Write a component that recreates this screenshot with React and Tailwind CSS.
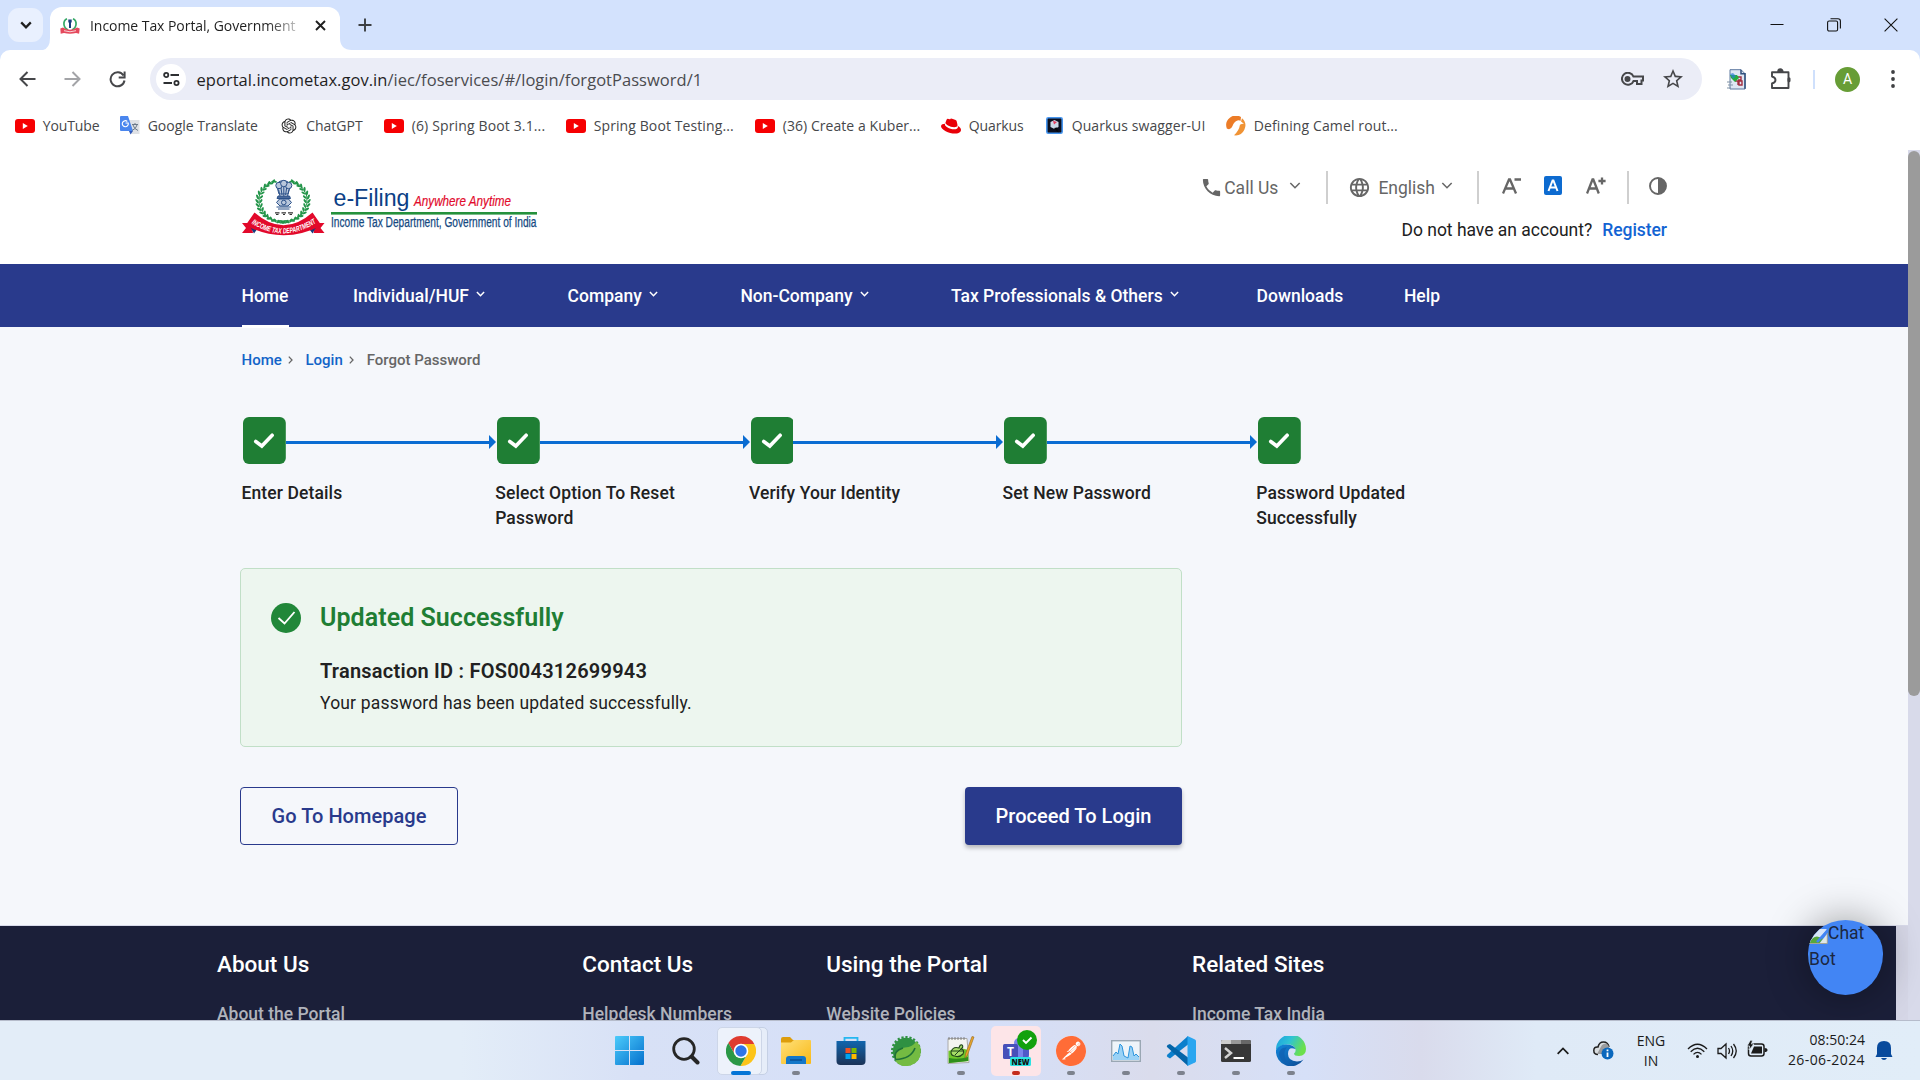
import React from "react";
import { SiPostman } from "react-icons/si";
import { FaRedhat } from "react-icons/fa";
import { RiOpenaiFill } from "react-icons/ri";
import { MdPhone, MdLanguage, MdOutlineStarBorder } from "react-icons/md";

/* ---------- shared glyphs ---------- */

function Chevron({ className, w = 10, h = 6, stroke = 1.6 }) {
  return (
    <svg className={className} width={w} height={h} viewBox="0 0 10 6" fill="none" stroke="currentColor" strokeWidth={stroke}>
      <path d="M1 0.8 5 4.9 9 0.8" />
    </svg>
  );
}

const LEAF_ANGLES = Array.from({ length: 15 }, (_, i) => 112 + i * 11.4);

function Emblem() {
  return (
    <g>
      <path d="M34 4.5A25 21.5 0 0 0 40 45.5M52 4.5A25 21.5 0 0 1 46 45.5" fill="none" stroke="#2f9a4e" strokeWidth="1" />
      {LEAF_ANGLES.map((deg) => {
        const a = (deg * Math.PI) / 180;
        const x = Math.cos(a) * 24;
        const y = 25 - Math.sin(a) * 21;
        const r = 90 - deg;
        return (
          <g key={deg} fill="#23954a">
            <ellipse cx={43 + x * 1.08} cy={y} rx="1.1" ry="2.6" transform={`rotate(${r - 125} ${43 + x * 1.08} ${y})`} />
            <ellipse cx={43 + x * 0.92} cy={y} rx="1" ry="2.3" transform={`rotate(${r - 55} ${43 + x * 0.92} ${y})`} />
            <ellipse cx={43 - x * 1.08} cy={y} rx="1.1" ry="2.6" transform={`rotate(${125 - r} ${43 - x * 1.08} ${y})`} />
            <ellipse cx={43 - x * 0.92} cy={y} rx="1" ry="2.3" transform={`rotate(${55 - r} ${43 - x * 0.92} ${y})`} />
          </g>
        );
      })}
      <g stroke="#2b5089" fill="#b9c7dc" strokeWidth="1">
        <path d="M38 7c1-3 9-3 11 0l1 4-2 7H39l-2-7z" />
        <circle cx="39" cy="9.5" r="3.2" />
        <circle cx="48.6" cy="9.5" r="3.2" />
        <circle cx="43.8" cy="7.5" r="3.2" />
        <path d="M38.5 13.5 40 20M43.8 11v9M49 13.5 47.6 20M41 12l1 7M46.6 12l-1 7" />
        <path d="M38 20h11.5l1 2.5H37z" fill="#4a699b" />
        <path d="M39.5 23h9l3 3.5-3.5 3.5h-8L36.500 26.500z" />
        <circle cx="43.800" cy="26.500" r="2.300" />
        <path d="M36.500 31h14.500M38 33h11.500" />
      </g>
      <path d="M35 36.800h4.500M41.500 36.800h4.500M48 36.800h5M36 38.500h2.500M43 38.500h2M49.500 38.500h2.500" stroke="#333" strokeWidth="1.200" />
      <path d="M2 47h9l2 10H2l4-5zM84.500 47h-9l-2 10h11l-4-5z" fill="#e2092b" />
      <path d="M8 47l10 5-4 5.500zM78.500 47l-10 5 4 5.500z" fill="#173a7c" />
      <path d="M14.500 36.500Q43.500 62 72.500 36.500L81.500 49.500Q43.500 69 5.500 49.500Z" fill="#e2092b" />
      <path id="ribbon" d="M10.500 46.800Q43.500 68.500 77.500 46" fill="none" />
      <text fontFamily="Liberation Sans" fontWeight="700" fontStyle="italic" fontSize="7.600" fill="#fff" textLength="69" lengthAdjust="spacingAndGlyphs">
        <textPath href="#ribbon" startOffset="1">INCOME TAX DEPARTMENT</textPath>
      </text>
    </g>
  );
}

function PortalLogo() {
  return (
    <svg className="overflow-visible" width="300" height="64" viewBox="0 0 300 64" fontFamily="Liberation Sans, Arial, sans-serif">
      <Emblem />
      <text x="93.500" y="29.600" fontSize="24.800" fill="#0b3f86" textLength="76" lengthAdjust="spacingAndGlyphs">e-Filing</text>
      <text x="174" y="29.600" fontSize="14.200" fontStyle="italic" fill="#e2092b" stroke="#e2092b" strokeWidth=".2" textLength="97" lengthAdjust="spacingAndGlyphs">Anywhere Anytime</text>
      <rect x="91" y="36" width="206" height="2.600" fill="#25913c" />
      <text x="91" y="51.200" fontSize="14" fill="#14497f" stroke="#14497f" strokeWidth=".25" textLength="205.500" lengthAdjust="spacingAndGlyphs">Income Tax Department, Government of India</text>
    </svg>
  );
}

function Favicon() {
  return (
    <svg width="20" height="16" viewBox="0 0 20 16">
      <path d="M7 .8C2.500 3 3 9.500 8 12M13 .8c4.500 2.200 4 8.700-1 11.200" fill="none" stroke="#35a865" strokeWidth="1.700" />
      <path d="M8.300 1.500h3.400V4l-.7 1v5H9V5l-.7-1z" fill="#173f7c" />
      <path d="M.3 10.500 3 9.500Q10 14 17 9.500l2.700 1-.6 5.300-3.100-.8Q10 16.500 4 15l-3.300.8z" fill="#e5485c" />
      <path d="M4 12.700q6 2.200 12 0" stroke="#f9d3d8" fill="none" />
    </svg>
  );
}

/* ---------- browser chrome ---------- */

function TabStrip() {
  return (
    <div className="flex h-[50px] items-start bg-[#d3e2fd]">
      <div className="ml-2 mt-2 flex h-[34px] w-[35px] items-center justify-center rounded-[11px] bg-[#e9f0fe] text-[#1f1f1f]">
        <Chevron w={12} h={8} stroke={1.900} />
      </div>
      <svg className="mt-[38px]" width="7" height="12" viewBox="0 0 7 12"><path d="M7 0v12H0Q7 10 7 0z" fill="#fff" /></svg>
      <div className="mt-[7px] flex h-[43px] w-[290px] items-center rounded-t-[12px] bg-white pb-[6px] pl-[10px]">
        <Favicon />
        <div className="ml-[10px] w-[207px] overflow-hidden whitespace-nowrap bg-gradient-to-r from-[#1f1f1f] from-85% to-[#c8c8c8] bg-clip-text text-[14px] tracking-[-0.05px] text-transparent">
          Income Tax Portal, Government
        </div>
        <svg className="ml-[18px]" width="11" height="11" viewBox="0 0 11 11" stroke="#1f1f1f" strokeWidth="1.900"><path d="M1 1l9 9M10 1l-9 9" /></svg>
      </div>
      <svg className="mt-[38px]" width="12" height="12" viewBox="0 0 12 12"><path d="M0 0v12h12Q0 12 0 0z" fill="#fff" /></svg>
      <svg className="ml-[6px] mt-[18px]" width="14" height="14" viewBox="0 0 14 14" stroke="#3c3f43" strokeWidth="1.900"><path d="M7 .5v13M.5 7h13" /></svg>
      <div className="ml-auto mr-[22px] mt-[18px] flex items-center gap-[43px]">
        <svg width="14" height="14" viewBox="0 0 14 14"><path d="M.5 6.500h13" stroke="#111" /></svg>
        <svg width="14" height="14" viewBox="0 0 14 14" fill="none" stroke="#111" strokeWidth="1.100"><rect x=".6" y="3" width="10" height="10" rx="1.500" /><path d="M3.500.7H11Q13.400.7 13.400 3v7.500" /></svg>
        <svg width="14" height="14" viewBox="0 0 14 14" stroke="#111" strokeWidth="1.100"><path d="M.6.600l12.800 12.800M13.400.600.6 13.400" /></svg>
      </div>
    </div>
  );
}

function Toolbar() {
  return (
    <div className="bg-[#d3e2fd]">
      <div className="flex h-[58px] items-center rounded-t-[10px] bg-white pl-[19px] text-[#46474a]">
        <svg width="17" height="16" viewBox="0 0 17 16" fill="none" stroke="currentColor" strokeWidth="2"><path d="M16.500 8H2M8.500 1 1.500 8l7 7" /></svg>
        <svg className="ml-[28px]" width="17" height="16" viewBox="0 0 17 16" fill="none" stroke="#a3a4a7" strokeWidth="2"><path d="M.5 8H15M8.500 1l7 7-7 7" /></svg>
        <svg className="ml-[28px]" width="17" height="17" viewBox="0 0 17 17" fill="none" stroke="currentColor" strokeWidth="2"><path d="M14.500 4.500A7 7 0 1 0 15.500 9.500M15.600.500v6H9.700" /></svg>
        <div className="ml-6 flex h-[42px] w-[1552px] items-center rounded-full bg-[#ebedf7] pl-[6px] pr-[17px]">
          <div className="flex h-[30px] w-[30px] items-center justify-center rounded-full bg-white text-[#2d2f32]">
            <svg width="17" height="14" viewBox="0 0 17 14" fill="none" stroke="currentColor" strokeWidth="1.800">
              <circle cx="3.200" cy="3" r="2.100" /><path d="M7.500 3H16M.5 11H9" /><circle cx="13.500" cy="11" r="2.100" />
            </svg>
          </div>
          <div className="ml-[10.500px] whitespace-nowrap pt-[3px] text-[16.500px] tracking-[0.040px] text-[#4a4b4f]">
            <span className="text-[#1f1f1f]">eportal.incometax.gov.in</span>/iec/foservices/#/login/forgotPassword/1
          </div>
          <svg className="ml-auto" width="23" height="14" viewBox="0 0 23 14" fill="none" stroke="currentColor" strokeWidth="2">
            <path d="M12.500 4.500H22v4h-1.500V12H16V9h-3.500A6 6 0 1 1 12.500 4.500z" /><circle cx="6.500" cy="7" r="2" fill="currentColor" />
          </svg>
          <MdOutlineStarBorder className="ml-[17px]" size={24} />
        </div>
        <svg className="ml-[25px]" width="19" height="21" viewBox="0 0 19 21">
          <path d="M3 .7h11l4 4V20H3z" fill="#dfe6f3" stroke="#5d789f" /><path d="M14 .7v4h4v15" fill="none" stroke="#31517e" strokeWidth="1.500" />
          <path d="M9 8h5v3h-3M8 12h3v4M12 12h3v4h-3z" fill="none" stroke="#a32e3f" strokeWidth="1.400" />
          <path d="M3 6h7l2 3-4 4-4-4z" fill="#26ad3d" /><path d="M3 5l3-1 3 3-3 3z" fill="#287ed5" opacity=".7" />
          <path d="M0 13h5M1 16h5M0 19h4" stroke="#8193a5" />
        </svg>
        <svg className="ml-[24px]" width="22" height="22" viewBox="0 0 22 22" fill="none" stroke="currentColor" strokeWidth="1.900">
          <path d="M2 4.200h16.500V20H2v-4.500q3.500-1 3.500-3.500T2 8.500z" strokeLinejoin="round" /><path d="M8.200 3.500a2 2 0 0 1 4.400 0z" fill="currentColor" /><path d="M19 10.800v2" strokeWidth="3" strokeLinecap="round" />
        </svg>
        <div className="ml-[21px] h-[19px] w-[2px] bg-[#cfe0fc]" />
        <div className="ml-[20px] flex h-[25px] w-[25px] items-center justify-center rounded-full bg-[#679d36] font-[Roboto] text-[14px] text-white">A</div>
        <svg className="ml-[31px]" width="4" height="18" viewBox="0 0 4 18" fill="#3f4043"><circle cx="2" cy="2" r="1.900" /><circle cx="2" cy="9" r="1.900" /><circle cx="2" cy="16" r="1.900" /></svg>
      </div>
    </div>
  );
}

function YouTube() {
  return <svg width="20" height="14" viewBox="0 0 20 14"><rect width="20" height="14" rx="3" fill="#f60002" /><path d="M7.800 4v6l5-3z" fill="#fff" /></svg>;
}

function Translate() {
  return (
    <svg width="20" height="19" viewBox="0 0 20 19">
      <path d="M8 4h11.500v14H11z" fill="#dfe1e5" /><path d="M0 1Q0 0 1 0h7l5 15H1q-1 0-1-1z" fill="#4a86ee" /><path d="M9 15h4l-2.500 3.500z" fill="#3159b8" />
      <path d="M6.500 6H9.200A3 3 0 1 1 8.300 4.500" transform="translate(-1 1)" stroke="#fff" fill="none" strokeWidth="1.200" />
      <path d="M12 8.500h6M15 7v1.500M17 9q-1 4-5 5.500M13 9q1 4 5 5.500" stroke="#6c7a89" fill="none" />
    </svg>
  );
}

function Swagger() {
  return (
    <svg width="17" height="17" viewBox="0 0 17 17">
      <rect x=".8" y=".8" width="15.400" height="15.400" rx="1.500" fill="#0b0f1e" stroke="#4796ef" strokeWidth="1.600" />
      <path d="M8.500 3 12.500 5v5l-4 2-4-2V5z" fill="#cdd9e8" /><path d="M7 3.700l4 1.300-3 2.500z" fill="#e63b5e" /><path d="M8 11l3-.5 1.500 5-2-1.500z" fill="#06070c" />
    </svg>
  );
}

function Camel() {
  return (
    <svg width="20" height="20" viewBox="0 0 20 20">
      <path d="M15 1A9.700 9.700 0 0 0 .8 12.500Q4.500 15 6.500 10q1.500-4.500 5-5.500 2-.5 3 .5z" fill="#ec7c27" />
      <path d="M16 2.300l-1 3.200 3 2.300q-2-.3-4 1-1 6-6 10.500A9.800 9.800 0 0 0 16 2.300z" fill="#f09335" />
    </svg>
  );
}

const BOOKMARKS = [
  { icon: <YouTube />, label: "YouTube", cls: "w-[105px] tracking-[-0.1px]" },
  { icon: <Translate />, label: "Google Translate", cls: "w-[158.500px]" },
  { icon: <RiOpenaiFill size={18} color="#222" />, label: "ChatGPT", cls: "w-[105.500px]" },
  { icon: <YouTube />, label: "(6) Spring Boot 3.1...", cls: "w-[182px] tracking-[0.14px]" },
  { icon: <YouTube />, label: "Spring Boot Testing...", cls: "w-[189px] tracking-[0.1px]" },
  { icon: <YouTube />, label: "(36) Create a Kuber...", cls: "w-[186px] tracking-[0.06px]" },
  { icon: <FaRedhat size={20} color="#e90008" />, label: "Quarkus", cls: "w-[103px] tracking-[-0.1px]" },
  { icon: <Swagger />, label: "Quarkus swagger-UI", cls: "w-[182px] tracking-[0.1px]" },
  { icon: <Camel />, label: "Defining Camel rout...", cls: "w-[180px] tracking-[0.12px]" },
];

function Bookmarks() {
  return (
    <div className="flex h-[42px] bg-white pl-[15px] text-[14px] text-[#46474a]">
      {BOOKMARKS.map((b) => (
        <div key={b.label} className={`flex h-[35px] shrink-0 items-center whitespace-nowrap ${b.cls}`}>
          <span className="mr-[7.700px] flex w-5 justify-center">{b.icon}</span>
          {b.label}
        </div>
      ))}
    </div>
  );
}

/* ---------- portal page ---------- */

function SiteHeader() {
  return (
    <header className="flex h-[114px] justify-between bg-white pl-[240px] pr-[241px] pt-[21px] text-[17.500px]">
      <div className="pt-[5px]"><PortalLogo /></div>
      <div className="flex flex-col items-end">
        <div className="flex h-[33px] items-center text-[#666]">
          <MdPhone size={23} className="-mt-[1px]" />
          <span className="ml-[1px] pt-[2px]">Call Us</span>
          <Chevron className="mb-1 ml-[11px]" w={12} h={7} stroke={1.300} />
          <div className="ml-[25px] h-[33px] w-[2px] bg-[#cfcfcf]" />
          <MdLanguage size={23} className="ml-[20px]" />
          <span className="ml-[7px] pt-[2px]">English</span>
          <Chevron className="mb-1 ml-[6px]" w={12} h={7} stroke={1.300} />
          <div className="ml-[24px] h-[33px] w-[2px] bg-[#cfcfcf]" />
          <svg className="mb-1 ml-[23px]" width="20" height="17" viewBox="0 0 20 17" fill="none" stroke="currentColor" strokeWidth="2.300"><path d="M1 16.500 7 2.500h1L14 16.500M3.500 11.500h8.300M12.500 2.500H19" /></svg>
          <svg className="mb-1 ml-[22px]" width="18" height="19" viewBox="0 0 18 19"><rect width="18" height="19" rx="2" fill="#0d6bd0" /><path d="M4.500 15 8.600 4.500h.8L13.500 15M6 11.500h6" fill="none" stroke="#fff" strokeWidth="2" /></svg>
          <svg className="mb-1 ml-[24px]" width="20" height="17" viewBox="0 0 20 17" fill="none" stroke="currentColor" strokeWidth="2.300"><path d="M1 16.500 6.500 2.500h.8L12.800 16.500M3.300 11.500h7.500M16 0.500v7M12.400 4h7.200" /></svg>
          <div className="ml-[21px] h-[33px] w-[2px] bg-[#cfcfcf]" />
          <svg className="mb-1 ml-[20px]" width="18" height="18" viewBox="0 0 18 18"><circle cx="9" cy="9" r="8" fill="none" stroke="#666" strokeWidth="1.900" /><path d="M9 1a8 8 0 0 1 0 16z" fill="#666" /></svg>
        </div>
        <div className="mt-[13px] flex h-[26px] items-center text-[#212121]">
          <span className="tracking-[-0.02px]">Do not have an account?</span>
          <span className="ml-[10px] font-medium tracking-[-0.050px] text-[#1264d3]">Register</span>
        </div>
      </div>
    </header>
  );
}

const NAV = [
  { label: "Individual/HUF", cls: "w-[214.600px]", menu: true },
  { label: "Company", cls: "w-[172.800px]", menu: true },
  { label: "Non-Company", cls: "w-[210.600px]", menu: true },
  { label: "Tax Professionals & Others", cls: "w-[305.600px]", menu: true },
  { label: "Downloads", cls: "w-[147.300px]" },
  { label: "Help", cls: "" },
];

function NavBar() {
  return (
    <nav className="flex h-[63px] bg-[#293a8c] pl-[241.500px] text-[17.500px] font-medium text-white">
      <div className="mr-[64.500px] flex h-[64px] w-[47px] items-center border-b-[3px] border-white pt-[3px]">Home</div>
      {NAV.map((n) => (
        <div key={n.label} className={`flex items-center whitespace-nowrap pt-[2px] ${n.cls}`}>
          {n.label}
          {n.menu && <Chevron className="mb-[5px] ml-[7.500px]" w={9} h={6} stroke={1.700} />}
        </div>
      ))}
    </nav>
  );
}

function Crumb() {
  return <svg className="mb-[1px]" width="5" height="8" viewBox="0 0 5 8" fill="none" stroke="#666" strokeWidth="1.300"><path d="M.8.6 4 4 .8 7.400" /></svg>;
}

function Breadcrumbs() {
  return (
    <div className="mt-[21px] flex h-6 items-center text-[15px] font-medium text-[#1264c8]">
      <span className="w-[46.500px]">Home</span><Crumb />
      <span className="ml-[12.500px] w-[43.500px]">Login</span><Crumb />
      <span className="ml-[12.700px] text-[#666]">Forgot Password</span>
    </div>
  );
}

const STEPS = ["Enter Details", "Select Option To Reset Password", "Verify Your Identity", "Set New Password", "Password Updated Successfully"];

function Stepper() {
  return (
    <div className="mt-[45px] flex h-[112px]">
      {STEPS.map((s, i) => (
        <div key={s} className="w-[253.700px]">
          <div className="flex items-center pl-[1.700px]">
            <svg width="42.800" height="47" viewBox="0 0 43 47" preserveAspectRatio="none" className="shrink-0">
              <rect width="43" height="47" rx="6" fill="#1f7e34" />
              <path d="M12.800 24.500 18.900 29 29.300 18.200" fill="none" stroke="#fff" strokeWidth="3.600" strokeLinecap="round" />
            </svg>
            {i < 4 && (
              <div className="-mr-[0.700px] mt-[3px] flex flex-1 items-center">
                <div className="h-[3px] flex-1 bg-[#0a6cd2]" />
                <svg width="7" height="14" viewBox="0 0 7 14"><path d="M0 0l7 7-7 7z" fill="#0a6cd2" /></svg>
              </div>
            )}
          </div>
          <div className="mt-[17px] w-[200px] text-[17.500px] font-medium leading-[25px] tracking-[0.110px] text-[#212121]">{s}</div>
        </div>
      ))}
    </div>
  );
}

function SuccessCard() {
  return (
    <section className="-ml-[1.500px] mt-[39px] flex h-[179px] w-[942px] rounded-[5px] border border-[#c1dfc7] bg-[#edf6ef] pl-[30px] pt-[34px]">
      <svg width="30" height="30" viewBox="0 0 30 30"><circle cx="15" cy="15" r="15" fill="#218739" /><path d="M7.500 15 13.500 20.500 23.500 9" fill="none" stroke="#fff" strokeWidth="1.900" /></svg>
      <div className="ml-[19px]">
        <h1 className="text-[25px] font-semibold leading-[30px] tracking-[0.050px] text-[#1f7e34]">Updated Successfully</h1>
        <p className="mt-[25px] text-[20px] font-semibold leading-[26px] tracking-[0.240px] text-[#212121]">Transaction ID : FOS004312699943</p>
        <p className="mt-[7px] text-[17.500px] leading-[25px] tracking-[0.180px] text-[#212121]">Your password has been updated successfully.</p>
      </div>
    </section>
  );
}

function Actions() {
  return (
    <div className="-ml-[1.500px] mt-[40px] flex h-[58px] w-[942px] justify-between text-[20px] font-medium tracking-[0.030px]">
      <button className="w-[218px] rounded-[4px] border border-[#293a8c] text-[#293a8c]">Go To Homepage</button>
      <button className="w-[217px] rounded-[4px] bg-[#293a8c] text-white shadow-[0_3px_4px_rgba(0,0,0,0.25)]">Proceed To Login</button>
    </div>
  );
}

const FOOTER = [
  { head: "About Us", link: "About the Portal", cls: "w-[365.300px]" },
  { head: "Contact Us", link: "Helpdesk Numbers", cls: "w-[244px]" },
  { head: "Using the Portal", link: "Website Policies", cls: "w-[365.700px]" },
  { head: "Related Sites", link: "Income Tax India", cls: "" },
];

function Footer() {
  return (
    <footer className="h-[95px] border-t border-[#d8daea] bg-[#d5d6e6] pr-[12px]">
      <div className="flex h-[94px] overflow-hidden bg-[#1b1f39] pl-[217px] pt-[23px]">
        {FOOTER.map((f) => (
          <div key={f.head} className={`shrink-0 whitespace-nowrap ${f.cls}`}>
            <div className="text-[22.500px] font-medium leading-[30px] text-white">{f.head}</div>
            <div className="mt-[23px] text-[17.500px] font-medium leading-[24px] text-[#b0b3bb]">{f.link}</div>
          </div>
        ))}
      </div>
    </footer>
  );
}

function ChatBot() {
  return (
    <div className="absolute bottom-[25px] right-[37px] h-[75px] w-[75px] rounded-[50%_50%_50%_50%/44%_44%_54%_54%] bg-[#4285f4] shadow-[0_0_42px_rgba(0,0,0,0.4)]">
      <div className="h-full overflow-hidden rounded-[50%_50%_50%_50%/44%_44%_54%_54%] text-[17.500px] leading-[26px] text-[#1b2740]">
        <div className="flex items-center">
          <svg className="mt-[6px]" width="20" height="15" viewBox="0 0 20 15"><path d="M0 0h19L8 15H0z" fill="#d7e5f8" /><path d="M1 15q5-12 14-5l-4 5z" fill="#57a83c" /><path d="M19 5v10H11z" fill="#dfe7e6" /><path d="M20 1 9 13" stroke="#4285f4" strokeWidth="2.500" /><path d="M19.300 4v10.500H1" fill="none" stroke="#a6a695" /></svg>
          Chat
        </div>
        <div className="pl-[1px]">Bot</div>
      </div>
    </div>
  );
}

function Page() {
  return (
    <div className="relative flex h-[870px] bg-[#d8daea] font-[Roboto]">
      <main className="flex w-[1908px] flex-col overflow-hidden bg-[#f5f7fb]">
        <SiteHeader />
        <NavBar />
        <div className="h-[598px] shrink-0 pl-[241.500px]">
          <Breadcrumbs />
          <Stepper />
          <SuccessCard />
          <Actions />
        </div>
        <Footer />
      </main>
      <div className="mt-px h-[545px] w-3 rounded-full bg-[#9b9b9b]" />
      <div className="absolute bottom-0 right-0 h-[200px] w-[240px] overflow-hidden"><ChatBot /></div>
    </div>
  );
}

/* ---------- taskbar ---------- */

function Windows() {
  return (
    <svg width="29" height="29" viewBox="0 0 29 29">
      <defs><linearGradient id="win" x1="0" y1="0" x2="1" y2="1"><stop stopColor="#4ccbfb" /><stop offset="1" stopColor="#0470cd" /></linearGradient></defs>
      <path d="M1 0h13v14H0V1q0-1 1-1zM15 0h13q1 0 1 1v13H15zM0 15h14v14H1q-1 0-1-1zM15 15h14v13q0 1-1 1H15z" fill="url(#win)" />
    </svg>
  );
}

function SearchIcon() {
  return <svg width="28" height="28" viewBox="0 0 28 28" fill="none" stroke="#262626"><circle cx="12" cy="12" r="10.300" strokeWidth="2.800" /><path d="M19.500 19.500l6 6" strokeWidth="4" strokeLinecap="round" /></svg>;
}

function Chrome() {
  return (
    <svg width="30" height="30" viewBox="-15 -15 30 30">
      <path d="M-6.060 3.500-12.700-7.990A15 15 0 0 1 13.270-7H0z" fill="#df3b30" />
      <path d="M0-7H13.270A15 15 0 0 1-.57 14.990L6.060 3.500z" fill="#fcc419" />
      <path d="M6.060 3.500-.57 14.990A15 15 0 0 1-12.700-7.990L-6.060 3.500z" fill="#2b9846" />
      <circle r="7.300" fill="#fff" /><circle r="5.700" fill="#2f75e8" />
    </svg>
  );
}

function Folder() {
  return (
    <svg width="30" height="27" viewBox="0 0 30 27">
      <path d="M0 2Q0 0 2 0h7l3 3h6v6H0z" fill="#dd9d0c" />
      <defs><linearGradient id="fold" x1="0" y1="0" x2="1" y2="1"><stop stopColor="#ffe07a" /><stop offset="1" stopColor="#f9b916" /></linearGradient></defs>
      <path d="M0 5.500h10L13 3h16q1 0 1 1v22q0 1-1 1H1q-1 0-1-1z" fill="url(#fold)" />
      <path d="M5 27v-5q0-3 3-3h14q3 0 3 3v5z" fill="#1477c9" /><path d="M9 23h12" stroke="#0a4f94" strokeWidth="1.500" />
    </svg>
  );
}

function Store() {
  return (
    <svg width="30" height="30" viewBox="0 0 30 30">
      <path d="M8.500 6V1.800h13V6" fill="none" stroke="#25b7f0" strokeWidth="1.800" />
      <defs><linearGradient id="store" x1="0" y1="0" x2="0" y2="1"><stop stopColor="#1165ad" /><stop offset="1" stopColor="#1c3357" /></linearGradient></defs>
      <path d="M.5 5h29v20q0 4-4 4h-21q-4 0-4-4z" fill="url(#store)" />
      <path d="M9.500 12h5v5h-5z" fill="#f25022" /><path d="M15.500 12h5v5h-5z" fill="#7fba00" /><path d="M9.500 18h5v5h-5z" fill="#00a4ef" /><path d="M15.500 18h5v5h-5z" fill="#ffb900" />
    </svg>
  );
}

function SpringTools() {
  return (
    <svg width="30" height="30" viewBox="0 0 30 30">
      <circle cx="15" cy="15" r="13.800" fill="none" stroke="#2f9142" strokeWidth="2.400" strokeDasharray="2.200 1.800" />
      <circle cx="15" cy="15" r="13.200" fill="#2f9142" />
      <path d="M5 26Q2 13 14 11.500 22 11 25 5.500 30 9 29.800 15A14.700 14.700 0 0 1 5 26z" fill="#74bb42" />
      <path d="M4.500 23.500Q20 23 24 12M4.500 23.500Q2 15 12 12" fill="none" stroke="#1e7138" strokeWidth="1.600" />
    </svg>
  );
}

function NotepadPlus() {
  return (
    <svg width="30" height="29" viewBox="0 0 30 29">
      <path d="M2 2.500h19l2 24-21 1z" fill="#f4f5f1" stroke="#aaa" /><path d="M3 1v3M6 1v3M9 1v3M12 1v3M15 1v3M18 1v3" stroke="#777" strokeWidth=".9" />
      <path d="M2.500 15q10-5 19.500-1l.6 11-20 2z" fill="#71c72c" /><path d="M3 22q9 2 19-1v4l-19 2z" fill="#2f8f1c" />
      <path d="M5 16q2-6 8-4 1-4 3-3 2 2-1 4 4 1 2 5-4 4-8 2-4 0-4-4z" fill="#a7dc68" stroke="#21461b" strokeWidth="1.100" /><path d="M6 15h11M9 19l6-6" stroke="#21461b" />
      <path d="M28 1l-6.500 18-2.500 3 .5-4L26 .5z" fill="#e9a62b" stroke="#94681f" strokeWidth=".6" />
    </svg>
  );
}

function Teams() {
  return (
    <svg width="50" height="50" viewBox="0 0 50 50" fontFamily="Open Sans, sans-serif">
      <rect width="50" height="50" rx="5" fill="#fde5e8" />
      <circle cx="28" cy="17" r="5" fill="#7b83eb" /><path d="M24 20h14v9q0 7-7 7h-4q-6-1-6-7z" fill="#5059c9" /><path d="M22 20h10v11q-1 4-5 4h-5z" fill="#7b83eb" />
      <rect x="12" y="18" width="15" height="15" rx="1.500" fill="#4750b9" /><text x="19.500" y="30" fontSize="12" fontWeight="700" fill="#fff" textAnchor="middle">T</text>
      <rect x="19" y="31" width="21" height="9" rx="1.500" fill="#2be3e3" /><text x="29.500" y="38.500" fontSize="8" fontWeight="800" fill="#111" textAnchor="middle" textLength="18" lengthAdjust="spacingAndGlyphs">NEW</text>
      <circle cx="36" cy="14" r="10" fill="#13a10e" /><path d="M32 14l3 3 5.500-5.500" fill="none" stroke="#fff" strokeWidth="1.900" />
      <rect x="21" y="45" width="8" height="4" rx="2" fill="#c42b1c" />
    </svg>
  );
}

function Graph() {
  return (
    <svg width="30" height="22" viewBox="0 0 30 22">
      <rect x=".7" y=".7" width="28.600" height="20.600" fill="#eef4f9" stroke="#9aa7b3" strokeWidth="1.400" />
      <path d="M2 16l3-4 2 2L9 4l2 2 2 10 4 2 2-12 2 1 2 9 2-2 3 3v3H2z" fill="#9ad2f6" /><path d="M2 16l3-4 2 2L9 4l2 2 2 10 4 2 2-12 2 1 2 9 2-2 3 3" fill="none" stroke="#2c95dd" />
    </svg>
  );
}

function VSCode() {
  return (
    <svg width="30" height="30" viewBox="0 0 30 30">
      <path d="M22 0v8.500L4 22.500 1.500 21q-1.500-1 0-2.500z" fill="#0b7fcc" /><path d="M22 30v-8.500L4 8 1.500 9q-1.500 1.500 0 2.500z" fill="#0465a9" /><path d="M21.500 0 29 3.500q1 .5 1 1.500v20q0 1-1 1.500L21.500 30z" fill="#2aa6f0" />
    </svg>
  );
}

function Terminal() {
  return (
    <svg width="30" height="22" viewBox="0 0 30 22">
      <rect width="30" height="22" rx="1.500" fill="#373737" /><path d="M1.500 0H10v4H0V1.500Q0 0 1.500 0z" fill="#ccc" /><path d="M10 0h10v4H10z" fill="#999" /><path d="M20 0h8.500Q30 0 30 1.500V4H20z" fill="#686868" />
      <path d="M4 8l6 5-6 5" fill="none" stroke="#d2d2d2" strokeWidth="2.500" /><path d="M12.500 18H23" stroke="#fff" strokeWidth="2" />
    </svg>
  );
}

function Edge() {
  return (
    <svg width="30" height="30" viewBox="0 0 30 30">
      <defs>
        <linearGradient id="edgeA" x1="0" y1="0" x2="1" y2="0.400"><stop stopColor="#1b9de2" /><stop offset=".5" stopColor="#2fc3d4" /><stop offset="1" stopColor="#6be04c" /></linearGradient>
        <linearGradient id="edgeB" x1="0" y1="0" x2="1" y2="1"><stop stopColor="#1287dc" /><stop offset="1" stopColor="#0c4a93" /></linearGradient>
      </defs>
      <path d="M0 14A15 15 0 0 1 30 13q0 6.500-7 7-5 0-5-2.500 2-1.500 1.500-4-1-5-8-5Q4 8.500 0 14z" fill="url(#edgeA)" />
      <path d="M0 14Q3 8.500 10 8.500 18 8.500 19.500 13 12 10 12 18q0 7 9 7.500 4 0 6.500-2A15 15 0 0 1 0 14z" fill="url(#edgeB)" />
      <path d="M3 19Q3 11 11 11.500 8 14 8.500 19 9.500 27 17 29.800A15 15 0 0 1 3 19z" fill="#0f5fb0" opacity=".7" />
    </svg>
  );
}

const APPS = [
  { icon: <Windows /> },
  { icon: <SearchIcon /> },
  { icon: <Chrome />, active: true },
  { icon: <Folder />, open: true },
  { icon: <Store /> },
  { icon: <SpringTools /> },
  { icon: <NotepadPlus />, open: true },
  { icon: <Teams /> },
  { icon: <span className="rounded-full bg-white"><SiPostman size={30} color="#ff6c37" /></span>, open: true },
  { icon: <Graph />, open: true },
  { icon: <VSCode />, open: true },
  { icon: <Terminal />, open: true },
  { icon: <Edge />, open: true },
];

function Taskbar() {
  return (
    <div className="flex h-[60px] items-center border-t border-[#b6bccb] bg-[linear-gradient(90deg,#e3edf8_0%,#e3edf8_24%,#d8e1f6_33%,#d5dff8_52%,#dadcec_60%,#d6e0f8_68%,#d9dbec_74%,#dfeaf7_80%,#e1edf8_100%)] text-[14px] text-[#1b1b1b]">
      <div className="ml-[602px] flex">
        {APPS.map((a, i) => (
          <div key={i} className={`relative flex h-[54px] w-[55px] items-center justify-center ${i > 0 ? "pl-[2px]" : ""}`}>
            {a.active && <div className="absolute left-[8px] top-[3px] h-[48px] w-[48px] rounded-[5px] border border-[#c5d0e5] bg-[#e6edf9]" />}
            {a.active && <div className="absolute left-[5px] top-[3px] h-[48px] w-[45px] rounded-[5px] border border-[#cdd6e8] bg-[#edf2fb]" />}
            <span className="relative flex">{a.icon}</span>
            {a.active && <div className="absolute bottom-[3px] left-[19px] h-1 w-5 rounded-full bg-[#0575d6]" />}
            {a.open && <div className="absolute bottom-[3px] h-1 w-2 rounded-full bg-[#7d828d]" />}
          </div>
        ))}
      </div>
      <Chevron className="ml-[239px] rotate-180" w={14} h={8} stroke={1.300} />
      <svg className="ml-[23px]" width="21" height="19" viewBox="0 0 21 19">
        <path d="M5 13.500Q.8 13.500.8 9.500T5 6Q6 1 10.500 1T16 6" fill="#d8dcdf" stroke="#222" strokeWidth="1.500" /><path d="M4 13 9 4q5-4 7 2v7z" fill="#9a9c9e" />
        <circle cx="14.500" cy="12.500" r="6" fill="#0b68bd" /><path d="M14.500 11.500v4.500M14.500 8.500v1.700" stroke="#fff" strokeWidth="1.800" />
      </svg>
      <div className="ml-[22px] w-[30px] text-center leading-[20px]">ENG<br />IN</div>
      <svg className="ml-[21px]" width="21" height="16" viewBox="0 0 21 16" fill="none" stroke="#1b1b1b" strokeWidth="1.300"><path d="M1 6q9.500-9.500 19 0M3.700 8.700q6.800-6.800 13.600 0M6.500 11.400q4-4 8 0" /><circle cx="10.500" cy="13.500" r="1.500" fill="#1b1b1b" stroke="none" /></svg>
      <svg className="ml-[9px]" width="21" height="18" viewBox="0 0 21 18" fill="none" stroke="#1b1b1b" strokeWidth="1.300"><path d="M1 6.500h3L9 2v14L4 11.500H1zM11.500 6q2 3 0 6M14 4q3.500 5 0 10M16.500 2q5.500 7 0 14" /></svg>
      <svg className="mb-[3px] ml-[8px]" width="22" height="18" viewBox="0 0 22 18"><rect x="2.500" y="4" width="15.500" height="12" rx="2.500" fill="none" stroke="#1b1b1b" strokeWidth="1.500" /><path d="M5 13.500l3-7h8v7z" fill="#1b1b1b" /><path d="M18.500 8q3 0 3 2t-3 2z" fill="#1b1b1b" /><path d="M4.500 0 1 6h2.500L3 10l5-6H5.500l1-3.500z" fill="#1b1b1b" stroke="#e1edf8" strokeWidth=".8" /></svg>
      <div className="mb-[2px] ml-[18px] w-[79px] whitespace-nowrap text-right leading-[20px]">08:50:24<br /><span className="tracking-[0.400px]">26-06-2024</span></div>
      <svg className="ml-[10px]" width="18" height="19" viewBox="0 0 18 19" fill="#084a9c"><path d="M2 13V7q0-7 7-7t7 7v6l1.500 3H.5zM6 17h6q-1 2-3 2t-3-2z" /></svg>
    </div>
  );
}

export default function App() {
  return (
    <div className="h-[1080px] w-[1920px] overflow-hidden font-['Open_Sans',sans-serif]">
      <TabStrip />
      <Toolbar />
      <Bookmarks />
      <Page />
      <Taskbar />
    </div>
  );
}
